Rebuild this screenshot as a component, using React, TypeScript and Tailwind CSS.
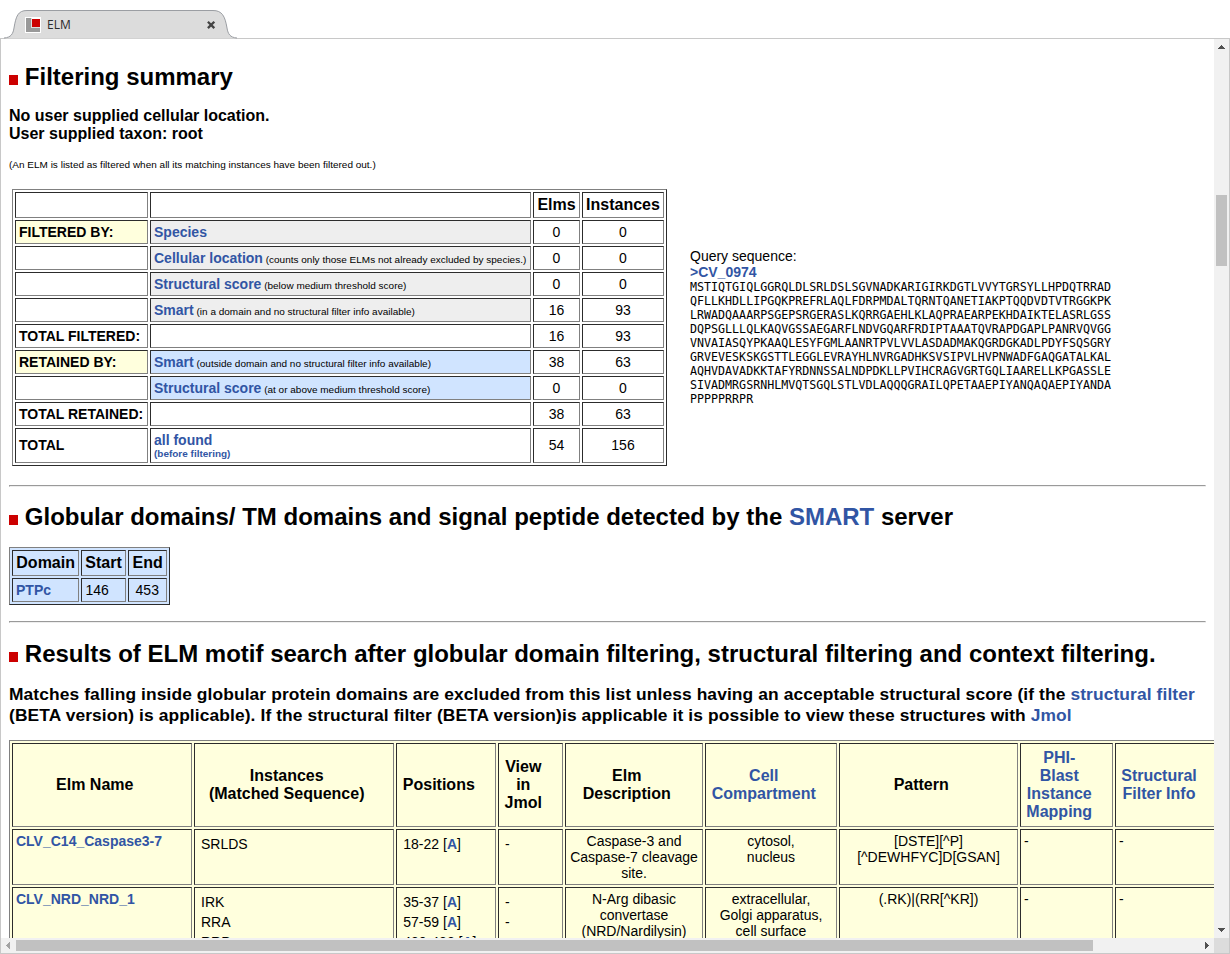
import type { ReactNode } from "react";
import clsx from "clsx";

const cellBorder =
  "border border-t-[#2c2c2c] border-l-[#2c2c2c] border-r-[#808080] border-b-[#808080]";
const tableBorder =
  "border border-t-[#808080] border-l-[#808080] border-r-[#2c2c2c] border-b-[#2c2c2c]";

function Cell({ className, children }: { className?: string; children?: ReactNode }) {
  return <div className={clsx(cellBorder, "overflow-hidden whitespace-nowrap", className)}>{children}</div>;
}

function Link({ className, children }: { className?: string; children: ReactNode }) {
  return (
    <a href="#" className={clsx("font-bold text-[#3155a4]", className)}>
      {children}
    </a>
  );
}

function Title({ children }: { children: ReactNode }) {
  return (
    <h1 className="flex h-7 items-start whitespace-nowrap text-[24px] leading-7 font-bold">
      <span className="mt-[12px] mr-[6.8px] h-[10px] w-[9px] shrink-0 bg-[#cc0000]" />
      <span>{children}</span>
    </h1>
  );
}

function Rule() {
  return (
    <div className="h-[2px] w-[1197px] border border-t-[#9a9a9a] border-l-[#9a9a9a] border-r-[#eeeeee] border-b-[#eeeeee]" />
  );
}

type Row = {
  label: string;
  link?: string;
  note?: string;
  elms: number;
  instances: number;
  tone?: "gray" | "blue";
};

const rows: Row[] = [
  { label: "FILTERED BY:", link: "Species", elms: 0, instances: 0, tone: "gray" },
  { label: "", link: "Cellular location", note: "(counts only those ELMs not already excluded by species.)", elms: 0, instances: 0, tone: "gray" },
  { label: "", link: "Structural score", note: "(below medium threshold score)", elms: 0, instances: 0, tone: "gray" },
  { label: "", link: "Smart", note: "(in a domain and no structural filter info available)", elms: 16, instances: 93, tone: "gray" },
  { label: "TOTAL FILTERED:", elms: 16, instances: 93 },
  { label: "RETAINED BY:", link: "Smart", note: "(outside domain and no structural filter info available)", elms: 38, instances: 63, tone: "blue" },
  { label: "", link: "Structural score", note: "(at or above medium threshold score)", elms: 0, instances: 0, tone: "blue" },
  { label: "TOTAL RETAINED:", elms: 38, instances: 63 },
];

const sequence = [
  "MSTIQTGIQLGGRQLDLSRLDSLSGVNADKARIGIRKDGTLVVYTGRSYLLHPDQTRRAD",
  "QFLLKHDLLIPGQKPREFRLAQLFDRPMDALTQRNTQANETIAKPTQQDVDTVTRGGKPK",
  "LRWADQAAARPSGEPSRGERASLKQRRGAEHLKLAQPRAEARPEKHDAIKTELASRLGSS",
  "DQPSGLLLQLKAQVGSSAEGARFLNDVGQARFRDIPTAAATQVRAPDGAPLPANRVQVGG",
  "VNVAIASQYPKAAQLESYFGMLAANRTPVLVVLASDADMAKQGRDGKADLPDYFSQSGRY",
  "GRVEVESKSKGSTTLEGGLEVRAYHLNVRGADHKSVSIPVLHVPNWADFGAQGATALKAL",
  "AQHVDAVADKKTAFYRDNNSSALNDPDKLLPVIHCRAGVGRTGQLIAARELLKPGASSLE",
  "SIVADMRGSRNHLMVQTSGQLSTLVDLAQQQGRAILQPETAAEPIYANQAQAEPIYANDA",
  "PPPPPRRPR",
];

function Lines({ items }: { items: ReactNode[] }) {
  return (
    <>
      {items.map((item, i) => (
        <div key={i}>{item}</div>
      ))}
    </>
  );
}

function FilterTable() {
  return (
    <div
      className={clsx(
        tableBorder,
        "ml-[3px] grid w-[655px] grid-cols-[133px_381px_47px_82px] grid-rows-[26px_repeat(8,24px)_35px] gap-[2px] p-[2px] text-[14px] leading-[22px]",
      )}
    >
      <Cell />
      <Cell />
      <Cell className="text-center text-[16px] leading-6 font-bold">Elms</Cell>
      <Cell className="text-center text-[16px] leading-6 font-bold">Instances</Cell>
      {rows.map((row, i) => (
        <div key={i} className="contents">
          <Cell className={clsx("pl-[3px] font-bold", row.label.endsWith("BY:") && "bg-[#ffffdd]")}>{row.label}</Cell>
          <Cell className={clsx("pl-[3px]", row.tone === "gray" && "bg-[#eeeeee]", row.tone === "blue" && "bg-[#d0e4ff]")}>
            {row.link && <Link>{row.link}</Link>}
            {row.note && <span className="text-[9.98px] tracking-[0.012px]"> {row.note}</span>}
          </Cell>
          <Cell className="text-center">{row.elms}</Cell>
          <Cell className="text-center">{row.instances}</Cell>
        </div>
      ))}
      <Cell className="pl-[3px] leading-[33px] font-bold">TOTAL</Cell>
      <Cell className="pt-[3px] pl-[3px] leading-4">
        <Link className="block">all found</Link>
        <Link className="block text-[9.98px] leading-3">(before filtering)</Link>
      </Cell>
      <Cell className="text-center leading-[33px]">54</Cell>
      <Cell className="text-center leading-[33px]">156</Cell>
    </div>
  );
}

function DomainTable() {
  return (
    <div
      className={clsx(
        tableBorder,
        "grid w-[161px] grid-cols-[67px_45px_39px] grid-rows-[26px_24px] gap-[2px] bg-[#d0e4ff] p-[2px] text-[14px] leading-[22px]",
      )}
    >
      <Cell className="pl-[3.3px] text-[16px] leading-6 font-bold">Domain</Cell>
      <Cell className="pl-[3.3px] text-[16px] leading-6 font-bold">Start</Cell>
      <Cell className="pl-[3.5px] text-[16px] leading-6 font-bold">End</Cell>
      <Cell className="pl-[3px]"><Link>PTPc</Link></Cell>
      <Cell className="pl-[3.4px]">146</Cell>
      <Cell className="pr-[0.5px] text-center">453</Cell>
    </div>
  );
}

function HeadCell({ lines, link, pr }: { lines: string[]; link?: boolean; pr: string }) {
  return (
    <Cell className={clsx("flex flex-col justify-center text-center text-[16px] leading-[18px] font-bold", link && "text-[#3155a4]", pr)}>
      <Lines items={lines} />
    </Cell>
  );
}

function position(range: string) {
  return (
    <>
      {range} [<Link>A</Link>]
    </>
  );
}

function ResultRow(props: {
  name: string;
  instances: string[];
  positions: string[];
  description: string[];
  compartment: string[];
  pattern: string[];
}) {
  return (
    <>
      <Cell className="pt-[3px] pl-[3px]"><Link>{props.name}</Link></Cell>
      <Cell className="pt-[4px] pl-[6px] leading-5"><Lines items={props.instances} /></Cell>
      <Cell className="pt-[4px] pl-[6.3px] leading-5"><Lines items={props.positions.map(position)} /></Cell>
      <Cell className="pt-[4px] pl-[6px] leading-5"><Lines items={props.positions.map(() => "-")} /></Cell>
      <Cell className="pt-[3px] text-center"><Lines items={props.description} /></Cell>
      <Cell className="pt-[3px] text-center"><Lines items={props.compartment} /></Cell>
      <Cell className="pt-[3px] text-center"><Lines items={props.pattern} /></Cell>
      <Cell className="pt-[3px] pl-[3px]">-</Cell>
      <Cell className="pt-[3px] pl-[3px]">-</Cell>
    </>
  );
}

function ResultsTable() {
  return (
    <div
      className={clsx(
        tableBorder,
        "grid w-[1300px] grid-cols-[180px_200px_100px_65px_138px_132px_179px_93px_174px] grid-rows-[84px_56px_90px] gap-[2px] bg-[#ffffdd] p-[2px] text-[14px] leading-4",
      )}
    >
      <HeadCell lines={["Elm Name"]} pr="pr-[14.5px]" />
      <HeadCell lines={["Instances", "(Matched Sequence)"]} pr="pr-[14.6px]" />
      <HeadCell lines={["Positions"]} pr="pr-[14.4px]" />
      <HeadCell lines={["View", "in", "Jmol"]} pr="pr-[14.5px]" />
      <HeadCell lines={["Elm", "Description"]} pr="pr-[14.6px]" />
      <HeadCell lines={["Cell", "Compartment"]} link pr="pr-[14.5px]" />
      <HeadCell lines={["Pattern"]} pr="pr-[14.6px]" />
      <HeadCell lines={["PHI-", "Blast", "Instance", "Mapping"]} link pr="pr-[14.5px]" />
      <HeadCell lines={["Structural", "Filter Info"]} link pr="pr-[86px]" />
      <ResultRow
        name="CLV_C14_Caspase3-7"
        instances={["SRLDS"]}
        positions={["18-22"]}
        description={["Caspase-3 and", "Caspase-7 cleavage", "site."]}
        compartment={["cytosol,", "nucleus"]}
        pattern={["[DSTE][^P]", "[^DEWHFYC]D[GSAN]"]}
      />
      <ResultRow
        name="CLV_NRD_NRD_1"
        instances={["IRK", "RRA", "RRP"]}
        positions={["35-37", "57-59", "430-432"]}
        description={["N-Arg dibasic", "convertase", "(NRD/Nardilysin)"]}
        compartment={["extracellular,", "Golgi apparatus,", "cell surface"]}
        pattern={["(.RK)|(RR[^KR])"]}
      />
    </div>
  );
}

function Tab() {
  return (
    <div className="relative h-[38px] w-[240px] shrink-0">
      <svg className="absolute top-0 left-0" width="240" height="39" viewBox="0 0 240 39">
        <path
          d="M4 38.5 C11 37.5 13 34 14 28 C16 16 18 10.5 27 10.5 H213 C222 10.5 225 16 227 28 C228 34 230 37.5 237 38.5 Z"
          fill="#dcdcdc"
        />
        <path
          d="M4 38 C11 37.5 13 34 14 28 C16 16 18 10.5 27 10.5 H213 C222 10.5 225 16 227 28 C228 34 230 37.5 237 38"
          fill="none"
          stroke="#9b9ea3"
        />
      </svg>
      <div className="relative flex h-[38px] items-start pt-[17px] pl-[25px]">
        <svg width="16" height="16" viewBox="0 0 16 16" shapeRendering="crispEdges">
          <path d="M0 0H16V16H0Z" fill="#ffffff" />
          <path d="M1 1H6V11H15V15H1Z" fill="#999999" />
          <path d="M6 1H7V10H15V11H6Z" fill="#dddddd" />
          <path d="M7 2H15V10H7Z" fill="#cc0000" />
        </svg>
        <span className="ml-[6px] h-4 w-[160px] font-['Open_Sans',sans-serif] text-[12px] leading-4 text-[#2b2b2b]">ELM</span>
        <svg className="mt-[3px]" width="9" height="9" viewBox="0 0 9 9">
          <path d="M0.9 1.7 7.3 8.1M7.3 1.7 0.9 8.1" stroke="#444444" strokeWidth="2.3" />
        </svg>
      </div>
    </div>
  );
}

export default function App() {
  return (
    <div className="flex h-[954px] w-[1230px] flex-col overflow-hidden bg-white font-['Liberation_Sans',Arial,sans-serif] text-black">
      <Tab />
      <div className="grid h-[916px] grid-cols-[1213px_15px] grid-rows-[899px_15px] border border-[#c8c8c8]">
        <main className="overflow-hidden pt-[24px] pl-[8px]">
          <Title>Filtering summary</Title>
          <div className="mt-[16px] text-[16px] leading-[18px] font-bold">
            <p>No user supplied cellular location.</p>
            <p>User supplied taxon: root</p>
          </div>
          <p className="mt-[16px] h-3 text-[9.98px] leading-3 tracking-[0.012px]">
            (An ELM is listed as filtered when all its matching instances have been filtered out.)
          </p>
          <div className="mt-[18px] flex h-[277px] items-start">
            <FilterTable />
            <div className="mt-[59px] ml-[23px] text-[14px] leading-4">
              <p>Query sequence:</p>
              <p><Link>&gt;CV_0974</Link></p>
              <div className="font-['DejaVu_Sans_Mono',monospace] text-[11.66px] leading-[14px]">
                <Lines items={sequence} />
              </div>
            </div>
          </div>
          <div className="mt-[19px]"><Rule /></div>
          <div className="mt-[16px]">
            <Title>
              Globular domains/ TM domains and signal peptide detected by the <Link>SMART</Link> server
            </Title>
          </div>
          <div className="mt-[16px]"><DomainTable /></div>
          <div className="mt-[16px]"><Rule /></div>
          <div className="mt-[17px]">
            <Title>Results of ELM motif search after globular domain filtering, structural filtering and context filtering.</Title>
          </div>
          <div className="mt-[16px] text-[17.4px] leading-[21px] font-bold tracking-[0.1px] whitespace-nowrap">
            <p>
              Matches falling inside globular protein domains are excluded from this list unless having an acceptable structural score (if the{" "}
              <Link>structural filter</Link>
            </p>
            <p>
              (BETA version) is applicable). If the structural filter (BETA version)is applicable it is possible to view these structures with{" "}
              <Link>Jmol</Link>
            </p>
          </div>
          <div className="mt-[14px]"><ResultsTable /></div>
        </main>
        <div className="flex flex-col items-center bg-[#f1f1f1]">
          <svg className="mt-[6px]" width="7" height="4" viewBox="0 0 7 4" shapeRendering="crispEdges">
            <path d="M3 0H4V1H5V2H6V3H7V4H0V3H1V2H2V1H3Z" fill="#505050" />
          </svg>
          <div className="mt-[146px] h-[71px] w-[11px] bg-[#c1c1c1]" />
          <svg className="mt-auto mb-[6px]" width="7" height="4" viewBox="0 0 7 4" shapeRendering="crispEdges">
            <path d="M0 0H7V1H6V2H5V3H4V4H3V3H2V2H1V1H0Z" fill="#505050" />
          </svg>
        </div>
        <div className="flex items-center bg-[#f1f1f1]">
          <svg className="ml-[5px]" width="4" height="7" viewBox="0 0 4 7" shapeRendering="crispEdges">
            <path d="M4 0V7H3V6H2V5H1V4H0V3H1V2H2V1H3V0Z" fill="#a3a3a3" />
          </svg>
          <div className="ml-[6px] h-[11px] w-[1077px] bg-[#c1c1c1]" />
          <svg className="mr-[5px] ml-auto" width="4" height="7" viewBox="0 0 4 7" shapeRendering="crispEdges">
            <path d="M0 0V7H1V6H2V5H3V4H4V3H3V2H2V1H1V0Z" fill="#505050" />
          </svg>
        </div>
        <div className="bg-[#dcdcdc]" />
      </div>
    </div>
  );
}
